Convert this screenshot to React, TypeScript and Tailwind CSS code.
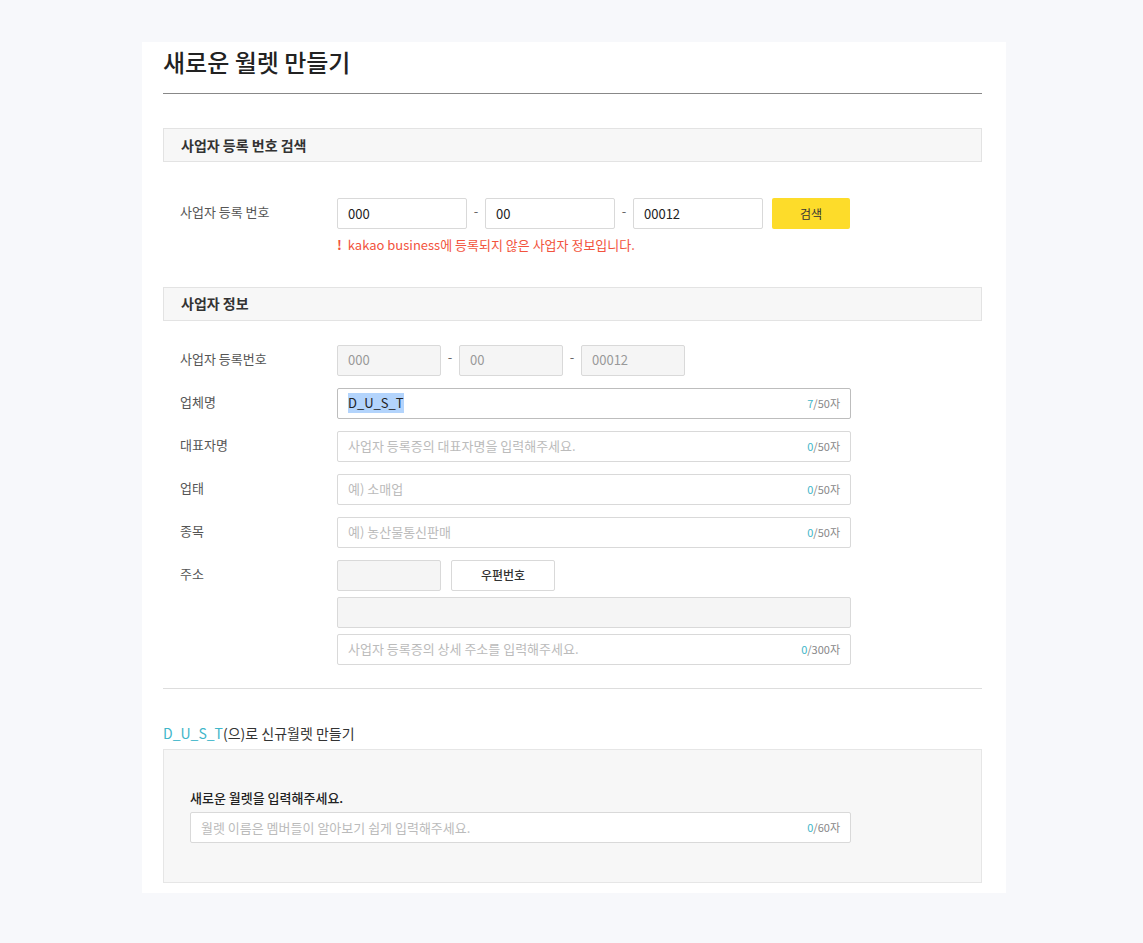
import type { ReactNode } from 'react'

const font = { fontFamily: '"Noto Sans CJK KR", "Noto Sans", sans-serif' }

function SectionHeader({ children }: { children: ReactNode }) {
  return (
    <div className="flex h-[34px] items-center border border-[#e3e3e3] bg-[#f7f7f7] pl-[17px] text-[14px] font-semibold text-[#333]">
      {children}
    </div>
  )
}

function Label({ children }: { children: ReactNode }) {
  return <div className="w-[174px] shrink-0 pl-[17px] pt-[4px] text-[13px] text-[#555]">{children}</div>
}

function Counter({ n, max }: { n: number; max: number }) {
  return (
    <span className="text-[11px] text-[#888]">
      <span className="text-[#3fb6c9]">{n}</span>/{max}자
    </span>
  )
}

function TextField({
  placeholder,
  n,
  max,
  w = 'w-[514px]',
}: {
  placeholder?: string
  n: number
  max: number
  w?: string
}) {
  return (
    <div className={`flex h-[31px] ${w} items-center justify-between rounded-[2px] border border-[#d9d9d9] bg-white pl-[10px] pr-[10px]`}>
      <span className="text-[13px] text-[#bbb]">{placeholder}</span>
      <Counter n={n} max={max} />
    </div>
  )
}

function Box({ value, w, gray }: { value?: string; w: string; gray?: boolean }) {
  return (
    <div
      className={`flex h-[31px] ${w} items-center rounded-[2px] border border-[#d9d9d9] px-[10px] text-[13px] ${
        gray ? 'bg-[#f5f5f5] text-[#999]' : 'bg-white text-[#222]'
      }`}
    >
      {value}
    </div>
  )
}

function Dash() {
  return <span className="w-[18px] pb-[6px] text-center text-[13px] text-[#666]">-</span>
}

export default function App() {
  return (
    <div className="min-h-[943px] bg-[#f7f8fb] pt-[42px] pb-[50px]" style={font}>
      <div className="ml-[142px] w-[864px] bg-white pl-[21px] pr-[24px] pb-[10px]">
        {/* Title */}
        <div className="flex h-[52px] items-start border-b border-[#888] pt-[2px]">
          <h1 className="text-[24px] leading-[36px] font-medium text-[#222]">새로운 월렛 만들기</h1>
        </div>

        {/* Search */}
        <div className="mt-[34px]">
          <SectionHeader>사업자 등록 번호 검색</SectionHeader>
          <div className="mt-[36px] flex">
            <Label>사업자 등록 번호</Label>
            <div>
              <div className="flex items-center">
                <Box value="000" w="w-[130px]" />
                <Dash />
                <Box value="00" w="w-[130px]" />
                <Dash />
                <Box value="00012" w="w-[130px]" />
                <button className="ml-[9px] h-[31px] w-[78px] rounded-[2px] bg-[#fddc2a] text-[12px] text-[#333]">검색</button>
              </div>
              <div className="mt-[6px] flex items-center text-[13px] text-[#f2533d]">
                <span className="mr-[6px] font-bold">!</span>
                kakao business에 등록되지 않은 사업자 정보입니다.
              </div>
            </div>
          </div>
        </div>

        {/* Business info */}
        <div className="mt-[32px]">
          <SectionHeader>사업자 정보</SectionHeader>
          <div className="mt-[24px] flex flex-col gap-[12px]">
            <div className="flex">
              <Label>사업자 등록번호</Label>
              <div className="flex items-center">
                <Box value="000" w="w-[104px]" gray />
                <Dash />
                <Box value="00" w="w-[104px]" gray />
                <Dash />
                <Box value="00012" w="w-[104px]" gray />
              </div>
            </div>
            <div className="flex">
              <Label>업체명</Label>
              <div className="flex h-[31px] w-[514px] items-center justify-between rounded-[2px] border border-[#bdbdbd] bg-white px-[10px]">
                <span className="bg-[#b3d4fc] text-[13px] text-[#222]">D_U_S_T</span>
                <Counter n={7} max={50} />
              </div>
            </div>
            <div className="flex">
              <Label>대표자명</Label>
              <TextField placeholder="사업자 등록증의 대표자명을 입력해주세요." n={0} max={50} />
            </div>
            <div className="flex">
              <Label>업태</Label>
              <TextField placeholder="예) 소매업" n={0} max={50} />
            </div>
            <div className="flex">
              <Label>종목</Label>
              <TextField placeholder="예) 농산물통신판매" n={0} max={50} />
            </div>
            <div className="flex">
              <Label>주소</Label>
              <div className="flex flex-col gap-[6px]">
                <div className="flex gap-[10px]">
                  <Box w="w-[104px]" gray />
                  <button className="h-[31px] w-[104px] rounded-[2px] border border-[#d9d9d9] bg-white text-[12px] font-medium text-[#333]">
                    우편번호
                  </button>
                </div>
                <Box w="w-[514px]" gray />
                <TextField placeholder="사업자 등록증의 상세 주소를 입력해주세요." n={0} max={300} />
              </div>
            </div>
          </div>
        </div>

        <div className="mt-[23px] border-t border-[#ddd]" />

        {/* New wallet */}
        <div className="mt-[34px]">
          <div className="text-[14px] text-[#333]">
            <span className="text-[#3fb6c9]">D_U_S_T</span>(으)로 신규월렛 만들기
          </div>
          <div className="mt-[5px] h-[134px] border border-[#e6e6e6] bg-[#f7f7f7] px-[26px] pt-[38px]">
            <div className="text-[13px] font-medium text-[#222]">새로운 월렛을 입력해주세요.</div>
            <div className="mt-[5px]">
              <TextField placeholder="월렛 이름은 멤버들이 알아보기 쉽게 입력해주세요." n={0} max={60} w="w-[661px]" />
            </div>
          </div>
        </div>
      </div>
    </div>
  )
}
